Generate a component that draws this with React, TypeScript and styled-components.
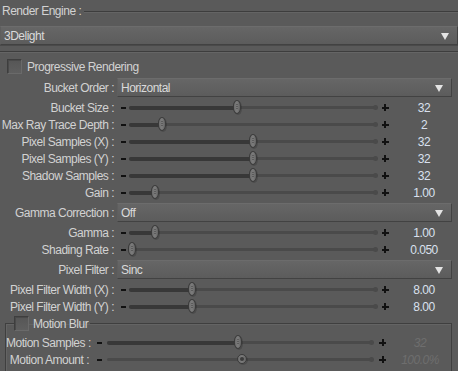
import React from "react";
import styled, { createGlobalStyle } from "styled-components";

const GlobalStyle = createGlobalStyle`
  html, body {
    margin: 0;
    padding: 0;
    background: #5a5a5a;
  }
  body {
    font-family: "Liberation Sans", Arial, sans-serif;
    font-size: 12px;
    letter-spacing: -0.5px;
    color: #d2d2d2;
  }
`;

const Panel = styled.div`
  width: 458px;
  height: 371px;
  overflow: hidden;
`;

const HeaderRow = styled.div`
  display: flex;
  align-items: center;
  height: 22px;
  padding-left: 2px;
  gap: 3px;
`;

const HeaderLine = styled.div`
  flex: 1;
  height: 1px;
  background: #3d3d3d;
  box-shadow: 0 1px 0 #646464;
`;

const Select = styled.div<{ $full?: boolean }>`
  display: flex;
  align-items: center;
  justify-content: space-between;
  height: 17px;
  padding: 0 8px 0 3px;
  border: 1px solid #424242;
  border-top-color: #6c6c6c;
  border-left-color: #5e5e5e;
  background: linear-gradient(#666666, #5c5c5c);
  color: #dadada;
  margin-right: ${(p) => (p.$full ? "0" : "6px")};
  box-shadow: ${(p) => (p.$full ? "0 1px 0 #4a4a4a" : "none")};
`;

const Arrow = styled.span`
  width: 0;
  height: 0;
  border-left: 4px solid transparent;
  border-right: 4px solid transparent;
  border-top: 7px solid #e4e4e4;
  margin-top: 1px;
`;

const EngineSelect = styled.div`
  padding-top: 4px;
`;

const Separator = styled.div`
  height: 1px;
  margin-top: 6px;
  background: #3d3d3d;
  box-shadow: 0 1px 0 #656565;
`;

const CheckRow = styled.label`
  display: flex;
  align-items: center;
  gap: 5px;
  height: 19px;
  margin-top: 5px;
  padding-left: 7px;
`;

const Box = styled.span`
  width: 13px;
  height: 13px;
  border: 1px solid #3e3e3e;
  border-right-color: #6a6a6a;
  border-bottom-color: #6a6a6a;
  background: linear-gradient(#565656, #5f5f5f);
  box-shadow: inset 1px 1px 0 #4a4a4a;
`;

const SelectRow = styled.div`
  display: grid;
  grid-template-columns: 117px 1fr;
  align-items: center;
  height: 23px;
`;

const Label = styled.span`
  text-align: right;
  padding-right: 3px;
  white-space: nowrap;
`;

const SliderRow = styled.div<{ $cols: string }>`
  display: grid;
  grid-template-columns: ${(p) => p.$cols};
  align-items: center;
  height: 17px;
`;

const Minus = styled.span`
  justify-self: center;
  width: 5px;
  height: 2px;
  background: #111;
`;

const Plus = styled.span`
  position: relative;
  justify-self: center;
  width: 7px;
  height: 7px;
  &::before,
  &::after {
    content: "";
    position: absolute;
    background: #111;
  }
  &::before {
    left: 0;
    top: 2.5px;
    width: 7px;
    height: 2px;
  }
  &::after {
    left: 2.5px;
    top: 0;
    width: 2px;
    height: 7px;
  }
`;

const Track = styled.div`
  position: relative;
  height: 13px;
`;

const Rail = styled.div`
  position: absolute;
  left: 0;
  right: 0;
  top: 5px;
  height: 3px;
  border-radius: 2px;
  background: #4a4a4a;
  &::after {
    content: "";
    position: absolute;
    right: -1px;
    top: -1px;
    width: 5px;
    height: 5px;
    border-radius: 50%;
    background: #4a4a4a;
  }
`;

const Fill = styled.div`
  position: absolute;
  left: 0;
  top: 4.5px;
  height: 4px;
  border-radius: 2px;
  background: #383838;
`;

const Thumb = styled.div<{ $round?: boolean }>`
  position: absolute;
  top: ${(p) => (p.$round ? "1px" : "-1px")};
  width: ${(p) => (p.$round ? "10px" : "8px")};
  height: ${(p) => (p.$round ? "10px" : "14px")};
  margin-left: ${(p) => (p.$round ? "-5px" : "-4px")};
  border-radius: ${(p) => (p.$round ? "50%" : "4px / 6px")};
  border: 1px solid #3a3a3a;
  box-sizing: border-box;
  background: linear-gradient(90deg, #6e6e6e, #7c7c7c 50%, #646464);
  box-shadow: 1px 1px 0 rgba(0, 0, 0, 0.15);
  &::after {
    content: "";
    position: absolute;
    left: 50%;
    top: 50%;
    transform: translate(-50%, -50%);
    width: ${(p) => (p.$round ? "4px" : "1px")};
    height: ${(p) => (p.$round ? "4px" : "6px")};
    border-radius: ${(p) => (p.$round ? "50%" : "0")};
    background: ${(p) =>
      p.$round
        ? "#3c3c3c"
        : "repeating-linear-gradient(#3e3e3e 0 1px, transparent 1px 2px)"};
  }
`;

const Value = styled.span<{ $disabled?: boolean }>`
  text-align: center;
  padding-right: 3px;
  color: ${(p) => (p.$disabled ? "#6e6e6e" : "#d9e0ee")};
  font-style: ${(p) => (p.$disabled ? "italic" : "normal")};
`;

const Group = styled.fieldset`
  margin: 0 6px 0 5px;
  padding: 2px 0 6px 0;
  border: 1px solid #3f3f3f;
  box-shadow: inset 1px 1px 0 #646464;
  min-width: 0;
`;

const Legend = styled.legend`
  display: flex;
  align-items: center;
  gap: 4px;
  padding: 0 2px 0 0;
  margin-left: 8px;
  height: 17px;
`;

const MAIN_COLS = "117px 12px 248px 16px 1fr";
const GROUP_COLS = "86px 15px 266px 19px 1fr";

type SliderProps = {
  label: string;
  value: string;
  pos: number;
  cols?: string;
  disabled?: boolean;
  round?: boolean;
};

const Slider = ({ label, value, pos, cols = MAIN_COLS, disabled, round }: SliderProps) => (
  <SliderRow $cols={cols}>
    <Label>{label} :</Label>
    <Minus />
    <Track>
      <Rail />
      {!round && <Fill style={{ width: pos }} />}
      <Thumb $round={round} style={{ left: pos }} />
    </Track>
    <Plus />
    <Value $disabled={disabled}>{value}</Value>
  </SliderRow>
);

const Dropdown = ({ label, value }: { label: string; value: string }) => (
  <SelectRow>
    <Label>{label} :</Label>
    <Select>
      <span>{value}</span>
      <Arrow />
    </Select>
  </SelectRow>
);

const App = () => {
  return (
    <Panel>
      <GlobalStyle />
      <HeaderRow>
        <span>Render Engine :</span>
        <HeaderLine />
      </HeaderRow>
      <EngineSelect>
        <Select $full>
          <span>3Delight</span>
          <Arrow />
        </Select>
      </EngineSelect>
      <Separator />
      <CheckRow>
        <Box />
        Progressive Rendering
      </CheckRow>
      <Dropdown label="Bucket Order" value="Horizontal" />
      <Slider label="Bucket Size" value="32" pos={108} />
      <Slider label="Max Ray Trace Depth" value="2" pos={33} />
      <Slider label="Pixel Samples (X)" value="32" pos={124} />
      <Slider label="Pixel Samples (Y)" value="32" pos={124} />
      <Slider label="Shadow Samples" value="32" pos={124} />
      <Slider label="Gain" value="1.00" pos={26} />
      <Dropdown label="Gamma Correction" value="Off" />
      <Slider label="Gamma" value="1.00" pos={26} />
      <Slider label="Shading Rate" value="0.050" pos={3} />
      <Dropdown label="Pixel Filter" value="Sinc" />
      <Slider label="Pixel Filter Width (X)" value="8.00" pos={63} />
      <Slider label="Pixel Filter Width (Y)" value="8.00" pos={63} />
      <Group>
        <Legend>
          <Box />
          Motion Blur
        </Legend>
        <Slider label="Motion Samples" value="32" pos={131} cols={GROUP_COLS} disabled />
        <Slider label="Motion Amount" value="100.0%" pos={135} cols={GROUP_COLS} disabled round />
      </Group>
    </Panel>
  );
};

export default App;
